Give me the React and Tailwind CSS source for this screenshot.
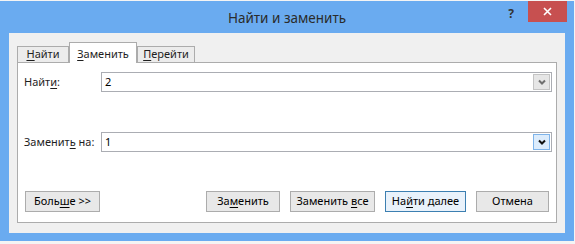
const font = "font-['Segoe_UI','Noto_Sans','Liberation_Sans',sans-serif]";

const Mn = ({ children }) => <span className="underline underline-offset-2">{children}</span>;

const Chevron = ({ dark }) => (
  <svg width="8" height="6" viewBox="0 0 8 6">
    <path d="M1 1.5 L4 4.5 L7 1.5" fill="none" stroke={dark ? "#111" : "#707070"} strokeWidth="2" />
  </svg>
);

const Combo = ({ value, active }) => (
  <div className="flex h-[20px] w-[451px] items-center border border-[#abadb3] bg-white">
    <span className="flex-1 pl-[3px] text-[11px] text-black">{value}</span>
    <div
      className={
        active
          ? "mr-px flex h-[16px] w-[17px] items-center justify-center border border-[#7eb4ea] bg-[#dcecfc]"
          : "mr-px flex h-[16px] w-[17px] items-center justify-center border border-[#c4c4c4] bg-[#e6e6e6]"
      }
    >
      <Chevron dark={active} />
    </div>
  </div>
);

const Btn = ({ children, w, def }) => (
  <button
    className={
      def
        ? "h-[21px] border border-[#3c7fb1] bg-[#e9f2fb] text-[11px] text-black " + w
        : "h-[21px] border border-[#acacac] bg-[#e8e8e8] text-[11px] text-black " + w
    }
  >
    {children}
  </button>
);

const Tab = ({ children, w, active }) =>
  active ? (
    <div className={"relative z-10 -mb-px flex h-[21px] items-start justify-center border border-b-0 border-[#acacac] bg-white pt-[3px] text-[11px] " + w}>
      {children}
    </div>
  ) : (
    <div className={"flex h-[16px] items-center justify-center border border-b-0 border-[#acacac] bg-[#ececec] text-[11px] " + w}>
      {children}
    </div>
  );

export default function App() {
  return (
    <div className={"h-[244px] w-[575px] bg-[#f4f4f4] pt-px text-[#1e1e1e] " + font}>
      <div className="flex h-[240px] w-[574px] flex-col bg-[#6aabf0]">
        <div className="grid h-[32px] grid-cols-[1fr_auto_1fr] items-start">
          <div />
          <div className="pt-[7px] text-[13.5px] text-[#2b2b2b]">Найти и заменить</div>
          <div className="flex items-start justify-end pr-[7px]">
            <span className="mr-[14px] mt-[4px] text-[12px] font-bold text-[#333]">?</span>
            <div className="flex h-[21px] w-[39px] items-center justify-center bg-[#c75050]">
              <svg width="9" height="9" viewBox="0 0 9 9">
                <path d="M1 1 L8 8 M8 1 L1 8" stroke="#fff" strokeWidth="1.6" />
              </svg>
            </div>
          </div>
        </div>
        <div className="mx-[9px] flex h-[200px] flex-col bg-[#f0f0f0] px-[8px] pt-[9px]">
          <div className="flex items-end">
            <Tab w="w-[52px]"><span><Mn>Н</Mn>айти</span></Tab>
            <Tab w="w-[68px]" active><span><Mn>З</Mn>аменить</span></Tab>
            <Tab w="w-[58px]"><span><Mn>П</Mn>ерейти</span></Tab>
          </div>
          <div className="flex h-[161px] flex-col border border-[#acacac] bg-white pl-[6px] pr-[4px] pt-[9px] text-[11px]">
            <div className="flex items-center">
              <span className="w-[77px]">Найт<Mn>и</Mn>:</span>
              <Combo value="2" />
            </div>
            <div className="mt-[40px] flex items-center">
              <span className="w-[77px]">Заменит<Mn>ь</Mn> на:</span>
              <Combo value="1" active />
            </div>
            <div className="mt-[39px] flex items-center">
              <div className="ml-[1px]">
                <Btn w="w-[75px]">Боль<Mn>ш</Mn>е &gt;&gt;</Btn>
              </div>
              <div className="ml-auto mr-[3px] flex gap-[10px]">
                <Btn w="w-[74px]">За<Mn>м</Mn>енить</Btn>
                <Btn w="w-[85px]">Заменить <Mn>в</Mn>се</Btn>
                <Btn w="w-[81px]" def>На<Mn>й</Mn>ти далее</Btn>
                <Btn w="w-[73px]">Отмена</Btn>
              </div>
            </div>
          </div>
        </div>
      </div>
    </div>
  );
}
